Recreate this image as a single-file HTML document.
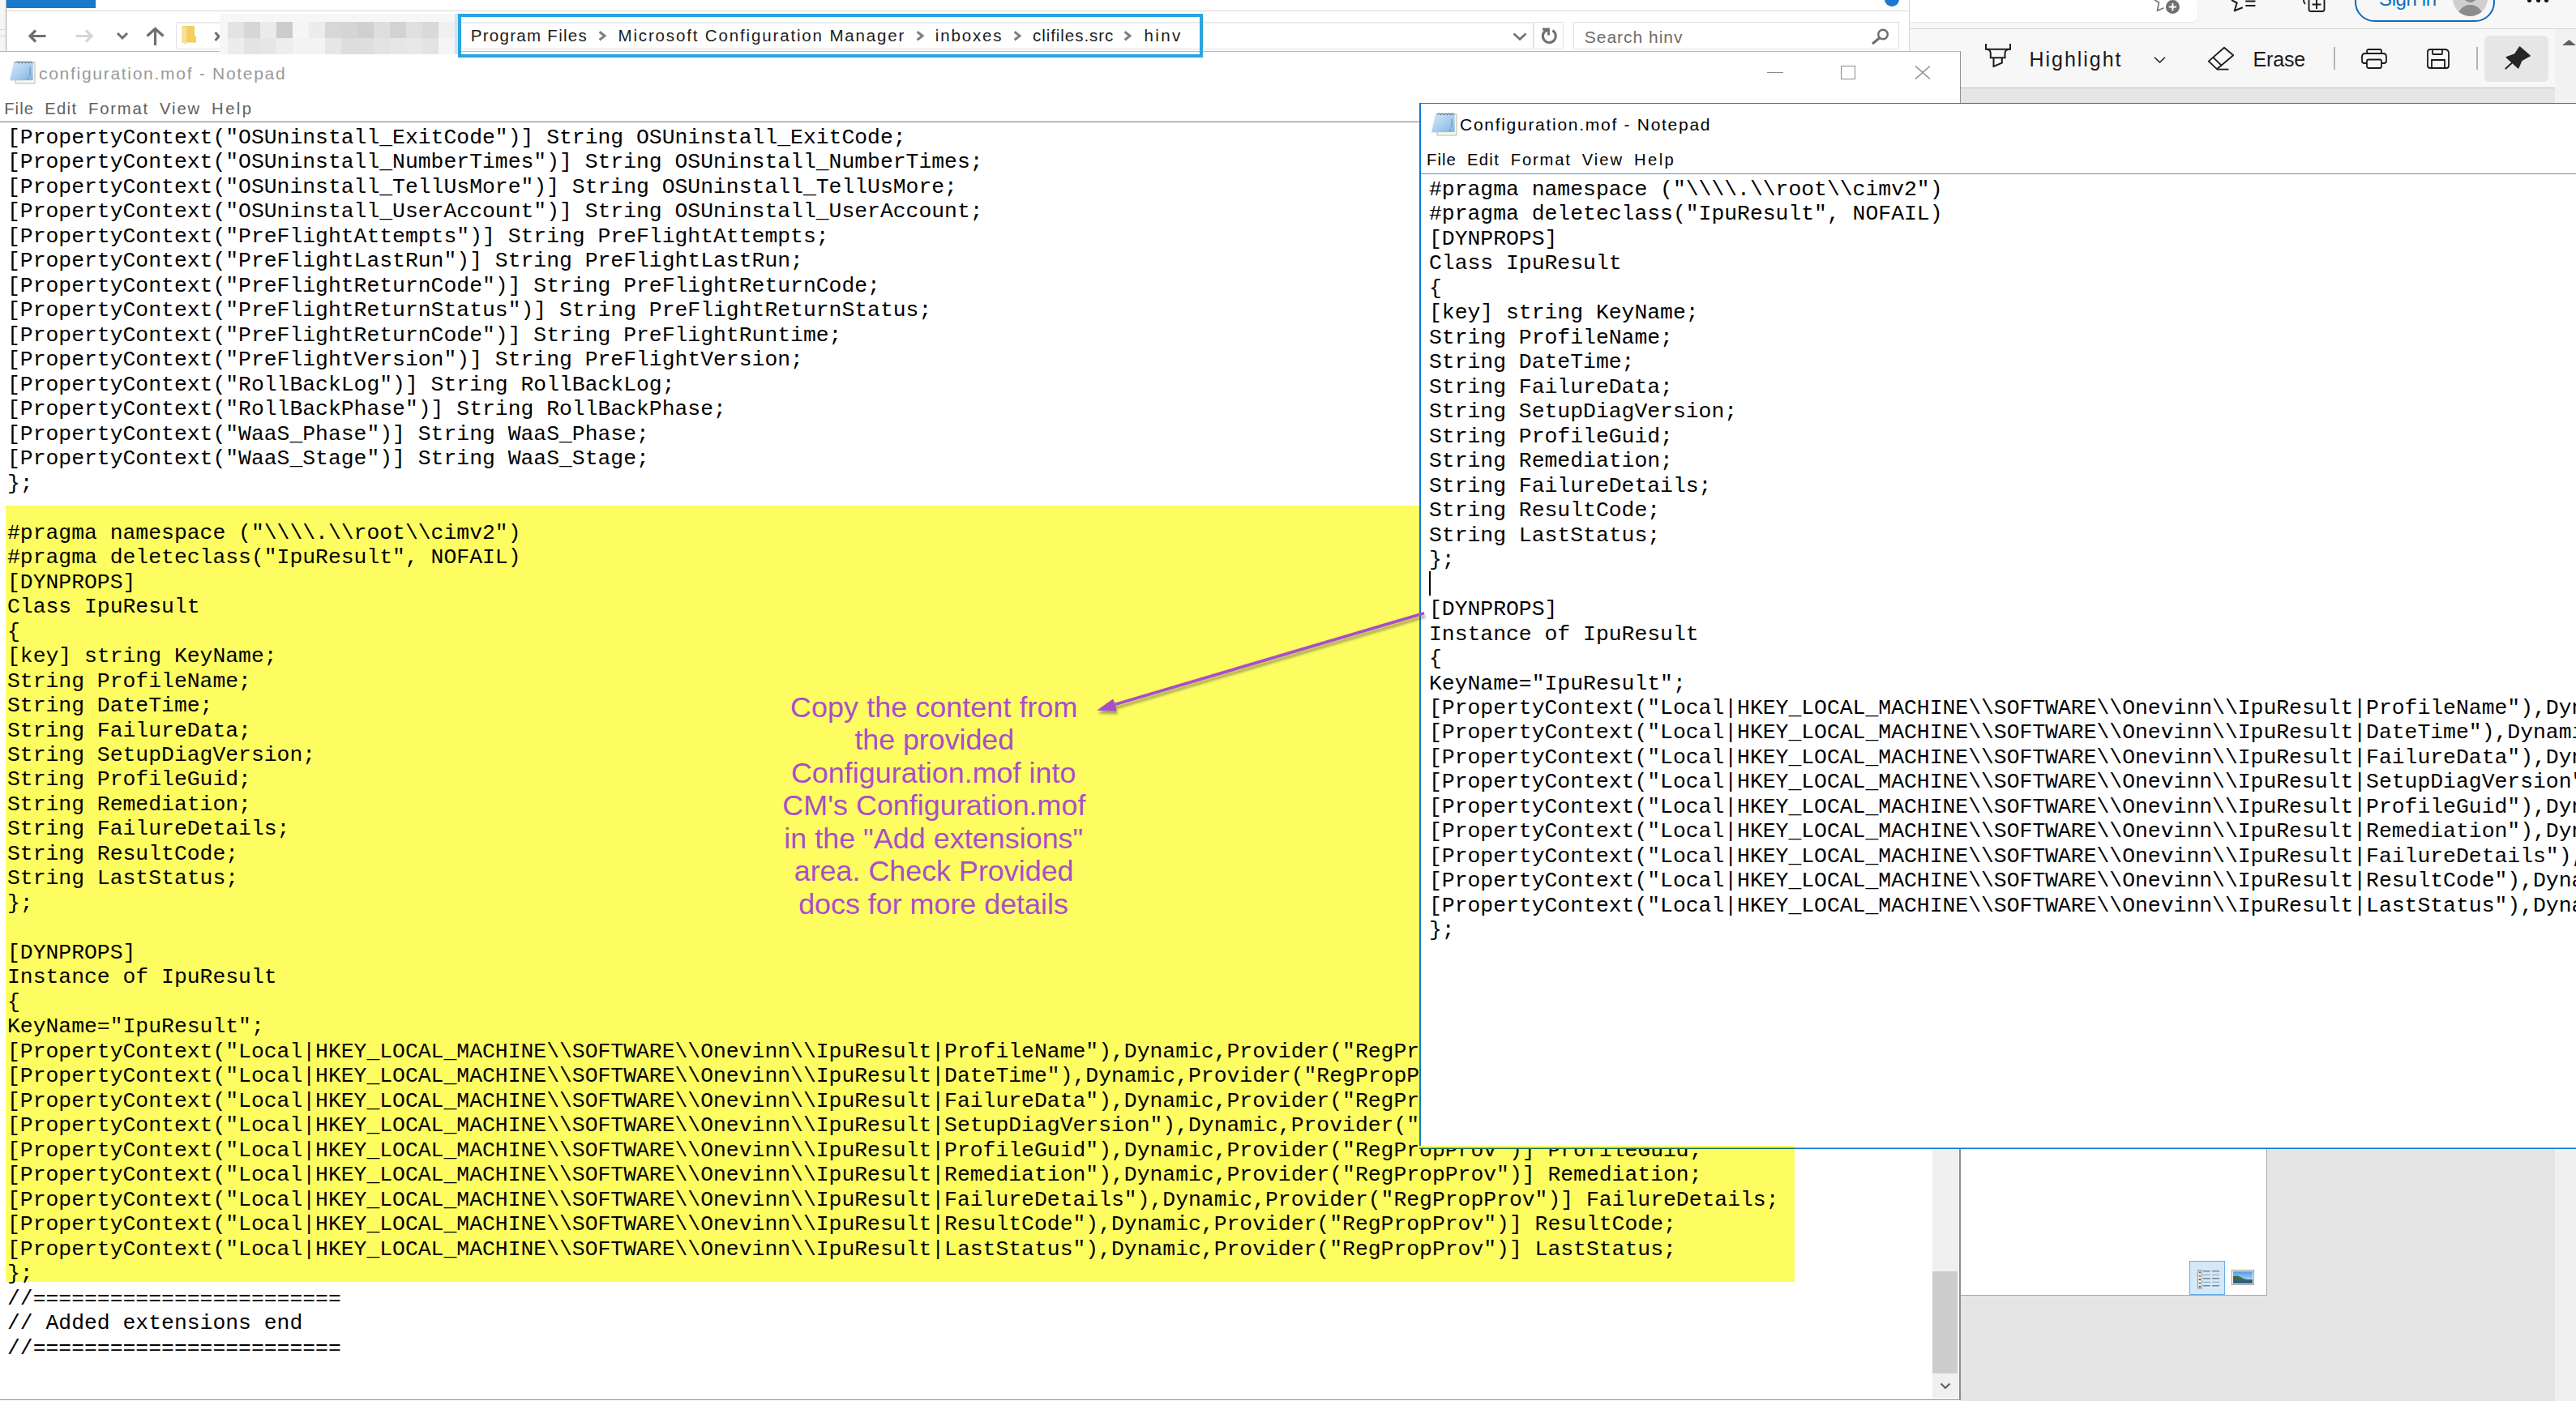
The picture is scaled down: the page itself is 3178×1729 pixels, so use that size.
<!DOCTYPE html>
<html><head><meta charset="utf-8"><style>
*{margin:0;padding:0;box-sizing:border-box}
html,body{width:3178px;height:1729px;overflow:hidden}
body{position:relative;background:#fff;font-family:"Liberation Sans",sans-serif;color:#000}
.a{position:absolute}
.ui{white-space:pre}
.mono{position:absolute;font-family:"Liberation Mono",monospace;font-size:26.40px;line-height:30.48px;white-space:pre;color:#000}
svg{overflow:visible}
</style></head><body>

<div class="a" style="left:0px;top:0px;width:2355px;height:63px;background:#fff"></div>
<div class="a" style="left:0px;top:0px;width:8px;height:63px;background:#f5f5f5;border-right:1px solid #a8a8a8"></div>
<div class="a" style="left:0px;top:36px;width:7px;height:1px;background:#d9d9d9"></div>
<div class="a" style="left:0px;top:44px;width:7px;height:1px;background:#d9d9d9"></div>
<div class="a" style="left:8px;top:0px;width:110px;height:10px;background:#1979ca"></div>
<div class="a" style="left:8px;top:13px;width:2347px;height:1px;background:#d6d6d6"></div>
<svg class="a" style="left:35px;top:36px" width="22" height="17" viewBox="0 0 22 17"><path d="M9 1.5 L2 8.5 L9 15.5 M2.5 8.5 H21.5" fill="none" stroke="#6f6f6f" stroke-width="3.2"/></svg>
<svg class="a" style="left:93px;top:36px" width="22" height="17" viewBox="0 0 22 17"><path d="M13 1.5 L20 8.5 L13 15.5 M19.5 8.5 H0.5" fill="none" stroke="#d6d6d6" stroke-width="3.2"/></svg>
<svg class="a" style="left:144px;top:40px" width="14" height="8" viewBox="0 0 14 8"><path d="M1 1 L7 7 L13 1" fill="none" stroke="#6f6f6f" stroke-width="3"/></svg>
<svg class="a" style="left:180px;top:34px" width="23" height="22" viewBox="0 0 23 22"><path d="M1.5 10.5 L11.5 1.5 L21.5 10.5 M11.5 2 V22" fill="none" stroke="#6f6f6f" stroke-width="3.2"/></svg>
<div class="a" style="left:217px;top:26.5px;width:1675px;height:34.5px;border:1px solid #e2e2e2;border-top:2px solid #ebebeb;background:#fff"></div>
<div class="a" style="left:1892px;top:27px;width:37px;height:34px;border:1px solid #e3e3e3;background:#fff"></div>
<div class="a" style="left:1941px;top:27px;width:402px;height:34px;border:1px solid #e2e2e2;background:#fff"></div>
<svg class="a" style="left:224px;top:31px" width="19" height="25" viewBox="0 0 19 25"><path d="M0.5 1 H16 V13.5 H18 V21.5 H0.5 Z" fill="#f3cf62"/><path d="M0.5 1 L6 3 V24 L0.5 21.5 Z" fill="#f9e09a"/></svg>
<svg class="a" style="left:264px;top:39px" width="8" height="12" viewBox="0 0 8 12"><path d="M1.5 1 L6 6 L1.5 11" fill="none" stroke="#6f6f6f" stroke-width="3"/></svg>
<div class="a ui" style="left:580.80px;top:34.04px;font-size:20.5px;line-height:1;color:#1b1b1b;letter-spacing:1.280px;">Program Files</div>
<div class="a ui" style="left:762.50px;top:34.04px;font-size:20.5px;line-height:1;color:#1b1b1b;letter-spacing:1.851px;">Microsoft Configuration Manager</div>
<div class="a ui" style="left:1153.80px;top:34.04px;font-size:20.5px;line-height:1;color:#1b1b1b;letter-spacing:1.832px;">inboxes</div>
<div class="a ui" style="left:1274.00px;top:34.04px;font-size:20.5px;line-height:1;color:#1b1b1b;letter-spacing:0.947px;">clifiles.src</div>
<div class="a ui" style="left:1411.60px;top:34.04px;font-size:20.5px;line-height:1;color:#1b1b1b;letter-spacing:2.348px;">hinv</div>
<svg class="a" style="left:737.5px;top:38.3px" width="11" height="13" viewBox="0 0 11 13"><path d="M1.6 1.2 L8 6.2 L1.6 11.2" fill="none" stroke="#808080" stroke-width="3"/></svg>
<svg class="a" style="left:1130px;top:38.3px" width="11" height="13" viewBox="0 0 11 13"><path d="M1.6 1.2 L8 6.2 L1.6 11.2" fill="none" stroke="#808080" stroke-width="3"/></svg>
<svg class="a" style="left:1250.3px;top:38.3px" width="11" height="13" viewBox="0 0 11 13"><path d="M1.6 1.2 L8 6.2 L1.6 11.2" fill="none" stroke="#808080" stroke-width="3"/></svg>
<svg class="a" style="left:1386.2px;top:38.3px" width="11" height="13" viewBox="0 0 11 13"><path d="M1.6 1.2 L8 6.2 L1.6 11.2" fill="none" stroke="#808080" stroke-width="3"/></svg>
<svg class="a" style="left:1866px;top:40px" width="18" height="10" viewBox="0 0 18 10"><path d="M1.5 1.5 L9 8.5 L16.5 1.5" fill="none" stroke="#6f6f6f" stroke-width="2.6"/></svg>
<svg class="a" style="left:1900px;top:33px" width="24" height="24" viewBox="0 0 24 24"><path d="M15.4 4.6 A8 8 0 1 1 5.7 5.8 L9.5 3.8" fill="none" stroke="#6f6f6f" stroke-width="3.1"/><path d="M3 3 H10.5 V10.5" fill="none" stroke="#6f6f6f" stroke-width="2.8"/></svg>
<div class="a ui" style="left:1954.80px;top:34.62px;font-size:21px;line-height:1;color:#6d6d6d;letter-spacing:0.980px;">Search hinv</div>
<svg class="a" style="left:2308px;top:35px" width="23" height="20" viewBox="0 0 23 20"><circle cx="15" cy="7.5" r="5.8" fill="none" stroke="#6d6d6d" stroke-width="2.4"/><path d="M10.5 12 L2 19" stroke="#6d6d6d" stroke-width="3"/></svg>
<div class="a" style="left:2355px;top:0px;width:1px;height:63px;background:#d9d9d9"></div>
<div class="a" style="left:2325px;top:-10px;width:18px;height:18px;background:#1979ca;border-radius:50%"></div>
<div class="a" style="left:2356px;top:0px;width:822px;height:127px;background:#f7f7f7"></div>
<div class="a" style="left:2356px;top:0px;width:355px;height:27px;background:#fff;border-bottom-right-radius:7px;box-shadow:0 1px 2px rgba(0,0,0,.08)"></div>
<svg class="a" style="left:2658px;top:0px" width="32" height="18" viewBox="0 0 32 18"><path d="M0 0 L5.5 3 L3.5 13.3 L11.5 9.8" fill="none" stroke="#777" stroke-width="1.7" stroke-linejoin="round"/><circle cx="22.4" cy="8.6" r="8.5" fill="#707070"/><path d="M22.4 4 V13.2 M17.8 8.6 H27" stroke="#fff" stroke-width="2"/></svg>
<svg class="a" style="left:2753px;top:0px" width="32" height="16" viewBox="0 0 32 16"><path d="M0 0 L6.7 3.5 L3.7 13.3 L13.8 9.3" fill="none" stroke="#1b1b1b" stroke-width="2" stroke-linejoin="round"/><path d="M17.3 1.5 H29.4 M17.3 7 H29.4" stroke="#1b1b1b" stroke-width="2"/></svg>
<svg class="a" style="left:2840px;top:-4px" width="30" height="19" viewBox="0 0 30 19"><path d="M4 0 Q0 5 4 9" fill="none" stroke="#1b1b1b" stroke-width="1.8"/><rect x="8.5" y="1" width="19" height="17" rx="2.5" fill="none" stroke="#1b1b1b" stroke-width="1.9"/><path d="M18 4 V15 M12.5 9.5 H23.5" stroke="#1b1b1b" stroke-width="1.9"/></svg>
<div class="a" style="left:2905px;top:-22px;width:173px;height:49px;border:2px solid #0f6cbd;border-radius:25px"></div>
<div class="a ui" style="left:2935.00px;top:-12.62px;font-size:24px;line-height:1;color:#0f6cbd;letter-spacing:-0.373px;">Sign in</div>
<div class="a" style="left:3026px;top:-23px;width:43px;height:43px;border-radius:50%;background:#cfcfcf;overflow:hidden"><div class="a" style="left:6px;top:29px;width:31px;height:30px;border-radius:50%;background:#8c8c8c"></div><div class="a" style="left:13px;top:9px;width:17px;height:17px;border-radius:50%;background:#8c8c8c"></div></div>
<div class="a" style="left:3118.4px;top:-2px;width:5px;height:5px;background:#111;border-radius:50%"></div>
<div class="a" style="left:3128.6px;top:-2px;width:5px;height:5px;background:#111;border-radius:50%"></div>
<div class="a" style="left:3138.7px;top:-2px;width:5px;height:5px;background:#111;border-radius:50%"></div>
<div class="a" style="left:2356px;top:35px;width:822px;height:1px;background:#d4d4d4"></div>
<div class="a" style="left:2356px;top:36px;width:822px;height:72px;background:#f7f7f7"></div>
<div class="a" style="left:3152px;top:36px;width:26px;height:91px;background:#f2f2f2"></div>
<div class="a" style="left:2356px;top:108px;width:796px;height:1.5px;background:#c2c2c2"></div>
<div class="a" style="left:2356px;top:109px;width:796px;height:18px;background:#e6e6e6"></div>
<svg class="a" style="left:2449px;top:54px" width="32" height="30" viewBox="0 0 32 30"><path d="M1 0 V6.8 H31 V0" fill="none" stroke="#1b1b1b" stroke-width="2"/><path d="M2 6.8 Q6.8 7.5 6.8 12 V17.3 H24.5 V12 Q24.5 7.5 29.5 6.8" fill="none" stroke="#1b1b1b" stroke-width="2"/><path d="M10.5 17.3 V28 L20.8 23.7 V17.3" fill="none" stroke="#1b1b1b" stroke-width="2"/></svg>
<div class="a ui" style="left:2503.60px;top:60.63px;font-size:25px;line-height:1;color:#1b1b1b;letter-spacing:1.958px;">Highlight</div>
<svg class="a" style="left:2657px;top:70px" width="15" height="8" viewBox="0 0 15 8"><path d="M1 0.8 L7.5 7 L14 0.8" fill="none" stroke="#1b1b1b" stroke-width="1.5"/></svg>
<svg class="a" style="left:2724px;top:58px" width="33" height="30" viewBox="0 0 33 30"><path d="M11 27.6 H25.5" stroke="#1b1b1b" stroke-width="1.8"/><path d="M20 0.8 L31.2 10.2 L11 27.2 L0.8 17.6 Z" fill="none" stroke="#1b1b1b" stroke-width="1.8" stroke-linejoin="round"/><path d="M6.5 13 L16.5 22.6" stroke="#1b1b1b" stroke-width="1.8"/></svg>
<div class="a ui" style="left:2779.50px;top:60.63px;font-size:25px;line-height:1;color:#1b1b1b;letter-spacing:-0.151px;">Erase</div>
<div class="a" style="left:2879px;top:58px;width:2px;height:28px;background:#b4b4b4"></div>
<div class="a" style="left:3055px;top:58px;width:2px;height:28px;background:#b4b4b4"></div>
<svg class="a" style="left:2913px;top:60px" width="32" height="25" viewBox="0 0 32 25"><rect x="7" y="1" width="18" height="5" rx="2" fill="none" stroke="#1b1b1b" stroke-width="1.8"/><path d="M7 18 H4 Q1 18 1 15 V10 Q1 6 5 6 H27 Q31 6 31 10 V15 Q31 18 28 18 H25" fill="none" stroke="#1b1b1b" stroke-width="1.8"/><rect x="7" y="13.5" width="18" height="10.5" rx="2" fill="none" stroke="#1b1b1b" stroke-width="1.8"/></svg>
<svg class="a" style="left:2994px;top:60px" width="28" height="25" viewBox="0 0 28 25"><path d="M4 1 H22 Q27 1 27 6 V21 Q27 24 24 24 H4 Q1 24 1 21 V4 Q1 1 4 1 Z" fill="none" stroke="#1b1b1b" stroke-width="1.8"/><path d="M7 1 V6 Q7 7 8 7 H18 Q19 7 19 6 V1 M6 24 V14 H22 V24" fill="none" stroke="#1b1b1b" stroke-width="1.8"/></svg>
<div class="a" style="left:3065px;top:44px;width:79px;height:57px;background:#e6e6e6;border-radius:6px"></div>
<svg class="a" style="left:3088px;top:55px" width="36" height="32" viewBox="0 0 36 32"><path d="M20.6 3 L33 13.9 L22.7 19.6 L18.8 28.8 L4.3 15.7 L14.5 12.1 Z" fill="#262626" stroke="#262626" stroke-width="1.6" stroke-linejoin="round"/><path d="M10.6 22.9 L3.4 29.6" stroke="#262626" stroke-width="2" stroke-linecap="round"/></svg>
<svg class="a" style="left:3161px;top:49px" width="17" height="7" viewBox="0 0 17 7"><path d="M0 7 L8.5 0 L17 7 Z" fill="#606060"/></svg>
<div class="a" style="left:0px;top:63px;width:2419px;height:1665px;background:#fff;border:1px solid #8f8f8f;border-top-color:#b8b8b8;border-left:none"></div>
<svg class="a" style="left:12px;top:75px" width="32" height="29" viewBox="0 0 32 29"><defs><linearGradient id="ng12" x1="0" y1="0" x2="1" y2="1"><stop offset="0" stop-color="#d4e8f8"/><stop offset=".55" stop-color="#a9cdee"/><stop offset="1" stop-color="#7fb2e0"/></linearGradient></defs>
<path d="M7 2 H31 V28 H7 Z" fill="#f6f6f2" stroke="#b0aa88" stroke-width=".8"/>
<path d="M5 1.3 H28.6 V24 L0 24.4 Z" fill="url(#ng12)"/>
<path d="M25 8 V18 M24 20 q-3 2 -1 3" stroke="#5d8fc8" stroke-width="1" fill="none"/>
<path d="M7 2.6 q2.1 -3.2 4.2 0 q2.1 -3.2 4.2 0 q2.1 -3.2 4.2 0 q2.1 -3.2 4.2 0 q2.1 -3.2 4.2 0" fill="none" stroke="#56647c" stroke-width="1.1"/></svg>
<div class="a ui" style="left:48.00px;top:80.22px;font-size:21px;line-height:1;color:#999999;letter-spacing:1.713px;">configuration.mof - Notepad</div>
<div class="a" style="left:2180px;top:89px;width:20px;height:1px;background:#8a8a8a"></div>
<div class="a" style="left:2270.5px;top:81px;width:18.5px;height:17px;border:1px solid #8a8a8a"></div>
<svg class="a" style="left:2362px;top:81px" width="20" height="17" viewBox="0 0 20 17"><path d="M1 0.5 L19 16.5 M19 0.5 L1 16.5" stroke="#8a8a8a" stroke-width="1.5"/></svg>
<div class="a ui" style="left:5.20px;top:123.90px;font-size:20.2px;line-height:1;color:#606060;letter-spacing:1.066px;">File</div>
<div class="a ui" style="left:55.20px;top:123.90px;font-size:20.2px;line-height:1;color:#606060;letter-spacing:1.341px;">Edit</div>
<div class="a ui" style="left:109.00px;top:123.90px;font-size:20.2px;line-height:1;color:#606060;letter-spacing:1.835px;">Format</div>
<div class="a ui" style="left:196.90px;top:123.90px;font-size:20.2px;line-height:1;color:#606060;letter-spacing:1.963px;">View</div>
<div class="a ui" style="left:261.10px;top:123.90px;font-size:20.2px;line-height:1;color:#606060;letter-spacing:2.470px;">Help</div>
<div class="a" style="left:0px;top:149px;width:2417px;height:1px;background:#e8e8e8"></div>
<div class="a" style="left:0px;top:150px;width:2417px;height:1.2px;background:#8a8a8a"></div>
<div class="a" style="left:2383.5px;top:151px;width:32px;height:1575px;background:#f0f0f0"></div>
<div class="a" style="left:2384px;top:1569px;width:31px;height:126px;background:#cdcdcd"></div>
<svg class="a" style="left:2393px;top:1706px" width="14" height="9" viewBox="0 0 14 9"><path d="M1.5 1.5 L7 7 L12.5 1.5" fill="none" stroke="#606060" stroke-width="2.2"/></svg>
<div class="a" style="left:7px;top:624px;width:2207px;height:958px;background:#fdfd62"></div>
<div class="mono" style="left:9px;top:155.00px">[PropertyContext("OSUninstall_ExitCode")] String OSUninstall_ExitCode;</div>
<div class="mono" style="left:9px;top:185.48px">[PropertyContext("OSUninstall_NumberTimes")] String OSUninstall_NumberTimes;</div>
<div class="mono" style="left:9px;top:215.96px">[PropertyContext("OSUninstall_TellUsMore")] String OSUninstall_TellUsMore;</div>
<div class="mono" style="left:9px;top:246.44px">[PropertyContext("OSUninstall_UserAccount")] String OSUninstall_UserAccount;</div>
<div class="mono" style="left:9px;top:276.92px">[PropertyContext("PreFlightAttempts")] String PreFlightAttempts;</div>
<div class="mono" style="left:9px;top:307.40px">[PropertyContext("PreFlightLastRun")] String PreFlightLastRun;</div>
<div class="mono" style="left:9px;top:337.88px">[PropertyContext("PreFlightReturnCode")] String PreFlightReturnCode;</div>
<div class="mono" style="left:9px;top:368.36px">[PropertyContext("PreFlightReturnStatus")] String PreFlightReturnStatus;</div>
<div class="mono" style="left:9px;top:398.84px">[PropertyContext("PreFlightReturnCode")] String PreFlightRuntime;</div>
<div class="mono" style="left:9px;top:429.32px">[PropertyContext("PreFlightVersion")] String PreFlightVersion;</div>
<div class="mono" style="left:9px;top:459.80px">[PropertyContext("RollBackLog")] String RollBackLog;</div>
<div class="mono" style="left:9px;top:490.28px">[PropertyContext("RollBackPhase")] String RollBackPhase;</div>
<div class="mono" style="left:9px;top:520.76px">[PropertyContext("WaaS_Phase")] String WaaS_Phase;</div>
<div class="mono" style="left:9px;top:551.24px">[PropertyContext("WaaS_Stage")] String WaaS_Stage;</div>
<div class="mono" style="left:9px;top:581.72px">};</div>
<div class="mono" style="left:9px;top:642.68px">#pragma namespace ("\\\\.\\root\\cimv2")</div>
<div class="mono" style="left:9px;top:673.16px">#pragma deleteclass("IpuResult", NOFAIL)</div>
<div class="mono" style="left:9px;top:703.64px">[DYNPROPS]</div>
<div class="mono" style="left:9px;top:734.12px">Class IpuResult</div>
<div class="mono" style="left:9px;top:764.60px">{</div>
<div class="mono" style="left:9px;top:795.08px">[key] string KeyName;</div>
<div class="mono" style="left:9px;top:825.56px">String ProfileName;</div>
<div class="mono" style="left:9px;top:856.04px">String DateTime;</div>
<div class="mono" style="left:9px;top:886.52px">String FailureData;</div>
<div class="mono" style="left:9px;top:917.00px">String SetupDiagVersion;</div>
<div class="mono" style="left:9px;top:947.48px">String ProfileGuid;</div>
<div class="mono" style="left:9px;top:977.96px">String Remediation;</div>
<div class="mono" style="left:9px;top:1008.44px">String FailureDetails;</div>
<div class="mono" style="left:9px;top:1038.92px">String ResultCode;</div>
<div class="mono" style="left:9px;top:1069.40px">String LastStatus;</div>
<div class="mono" style="left:9px;top:1099.88px">};</div>
<div class="mono" style="left:9px;top:1160.84px">[DYNPROPS]</div>
<div class="mono" style="left:9px;top:1191.32px">Instance of IpuResult</div>
<div class="mono" style="left:9px;top:1221.80px">{</div>
<div class="mono" style="left:9px;top:1252.28px">KeyName="IpuResult";</div>
<div class="mono" style="left:9px;top:1282.76px">[PropertyContext("Local|HKEY_LOCAL_MACHINE\\SOFTWARE\\Onevinn\\IpuResult|ProfileName"),Dynamic,Provider("RegPropProv")] ProfileName;</div>
<div class="mono" style="left:9px;top:1313.24px">[PropertyContext("Local|HKEY_LOCAL_MACHINE\\SOFTWARE\\Onevinn\\IpuResult|DateTime"),Dynamic,Provider("RegPropProv")] DateTime;</div>
<div class="mono" style="left:9px;top:1343.72px">[PropertyContext("Local|HKEY_LOCAL_MACHINE\\SOFTWARE\\Onevinn\\IpuResult|FailureData"),Dynamic,Provider("RegPropProv")] FailureData;</div>
<div class="mono" style="left:9px;top:1374.20px">[PropertyContext("Local|HKEY_LOCAL_MACHINE\\SOFTWARE\\Onevinn\\IpuResult|SetupDiagVersion"),Dynamic,Provider("RegPropProv")] SetupDiagVersion;</div>
<div class="mono" style="left:9px;top:1404.68px">[PropertyContext("Local|HKEY_LOCAL_MACHINE\\SOFTWARE\\Onevinn\\IpuResult|ProfileGuid"),Dynamic,Provider("RegPropProv")] ProfileGuid;</div>
<div class="mono" style="left:9px;top:1435.16px">[PropertyContext("Local|HKEY_LOCAL_MACHINE\\SOFTWARE\\Onevinn\\IpuResult|Remediation"),Dynamic,Provider("RegPropProv")] Remediation;</div>
<div class="mono" style="left:9px;top:1465.64px">[PropertyContext("Local|HKEY_LOCAL_MACHINE\\SOFTWARE\\Onevinn\\IpuResult|FailureDetails"),Dynamic,Provider("RegPropProv")] FailureDetails;</div>
<div class="mono" style="left:9px;top:1496.12px">[PropertyContext("Local|HKEY_LOCAL_MACHINE\\SOFTWARE\\Onevinn\\IpuResult|ResultCode"),Dynamic,Provider("RegPropProv")] ResultCode;</div>
<div class="mono" style="left:9px;top:1526.60px">[PropertyContext("Local|HKEY_LOCAL_MACHINE\\SOFTWARE\\Onevinn\\IpuResult|LastStatus"),Dynamic,Provider("RegPropProv")] LastStatus;</div>
<div class="mono" style="left:9px;top:1557.08px">};</div>
<div class="mono" style="left:9px;top:1587.56px">//========================</div>
<div class="mono" style="left:9px;top:1618.04px">// Added extensions end</div>
<div class="mono" style="left:9px;top:1648.52px">//========================</div>
<div class="a" style="left:1751px;top:127px;width:1437px;height:1289px;background:#fff;border-top:1px solid #0b78d6;border-left:2px solid #0b78d6;overflow:hidden">
</div>
<svg class="a" style="left:1766px;top:139px" width="32" height="29" viewBox="0 0 32 29"><defs><linearGradient id="ng1766" x1="0" y1="0" x2="1" y2="1"><stop offset="0" stop-color="#d4e8f8"/><stop offset=".55" stop-color="#a9cdee"/><stop offset="1" stop-color="#7fb2e0"/></linearGradient></defs>
<path d="M7 2 H31 V28 H7 Z" fill="#f6f6f2" stroke="#b0aa88" stroke-width=".8"/>
<path d="M5 1.3 H28.6 V24 L0 24.4 Z" fill="url(#ng1766)"/>
<path d="M25 8 V18 M24 20 q-3 2 -1 3" stroke="#5d8fc8" stroke-width="1" fill="none"/>
<path d="M7 2.6 q2.1 -3.2 4.2 0 q2.1 -3.2 4.2 0 q2.1 -3.2 4.2 0 q2.1 -3.2 4.2 0 q2.1 -3.2 4.2 0" fill="none" stroke="#56647c" stroke-width="1.1"/></svg>
<div class="a ui" style="left:1801.00px;top:143.42px;font-size:21px;line-height:1;color:#000;letter-spacing:1.718px;">Configuration.mof - Notepad</div>
<div class="a ui" style="left:1760.00px;top:187.20px;font-size:20.2px;line-height:1;color:#000;letter-spacing:1.066px;">File</div>
<div class="a ui" style="left:1810.00px;top:187.20px;font-size:20.2px;line-height:1;color:#000;letter-spacing:1.341px;">Edit</div>
<div class="a ui" style="left:1863.80px;top:187.20px;font-size:20.2px;line-height:1;color:#000;letter-spacing:1.835px;">Format</div>
<div class="a ui" style="left:1951.70px;top:187.20px;font-size:20.2px;line-height:1;color:#000;letter-spacing:1.963px;">View</div>
<div class="a ui" style="left:2015.90px;top:187.20px;font-size:20.2px;line-height:1;color:#000;letter-spacing:2.470px;">Help</div>
<div class="a" style="left:1753px;top:214px;width:1425px;height:1.2px;background:#4a98dc"></div>
<div class="a" style="left:1753px;top:215px;width:1425px;height:1200px;overflow:hidden">
<div class="mono" style="left:10px;top:3.90px">#pragma namespace ("\\\\.\\root\\cimv2")</div>
<div class="mono" style="left:10px;top:34.38px">#pragma deleteclass("IpuResult", NOFAIL)</div>
<div class="mono" style="left:10px;top:64.86px">[DYNPROPS]</div>
<div class="mono" style="left:10px;top:95.34px">Class IpuResult</div>
<div class="mono" style="left:10px;top:125.82px">{</div>
<div class="mono" style="left:10px;top:156.30px">[key] string KeyName;</div>
<div class="mono" style="left:10px;top:186.78px">String ProfileName;</div>
<div class="mono" style="left:10px;top:217.26px">String DateTime;</div>
<div class="mono" style="left:10px;top:247.74px">String FailureData;</div>
<div class="mono" style="left:10px;top:278.22px">String SetupDiagVersion;</div>
<div class="mono" style="left:10px;top:308.70px">String ProfileGuid;</div>
<div class="mono" style="left:10px;top:339.18px">String Remediation;</div>
<div class="mono" style="left:10px;top:369.66px">String FailureDetails;</div>
<div class="mono" style="left:10px;top:400.14px">String ResultCode;</div>
<div class="mono" style="left:10px;top:430.62px">String LastStatus;</div>
<div class="mono" style="left:10px;top:461.10px">};</div>
<div class="mono" style="left:10px;top:522.06px">[DYNPROPS]</div>
<div class="mono" style="left:10px;top:552.54px">Instance of IpuResult</div>
<div class="mono" style="left:10px;top:583.02px">{</div>
<div class="mono" style="left:10px;top:613.50px">KeyName="IpuResult";</div>
<div class="mono" style="left:10px;top:643.98px">[PropertyContext("Local|HKEY_LOCAL_MACHINE\\SOFTWARE\\Onevinn\\IpuResult|ProfileName"),Dynamic,Provider("RegPropProv")] ProfileName;</div>
<div class="mono" style="left:10px;top:674.46px">[PropertyContext("Local|HKEY_LOCAL_MACHINE\\SOFTWARE\\Onevinn\\IpuResult|DateTime"),Dynamic,Provider("RegPropProv")] DateTime;</div>
<div class="mono" style="left:10px;top:704.94px">[PropertyContext("Local|HKEY_LOCAL_MACHINE\\SOFTWARE\\Onevinn\\IpuResult|FailureData"),Dynamic,Provider("RegPropProv")] FailureData;</div>
<div class="mono" style="left:10px;top:735.42px">[PropertyContext("Local|HKEY_LOCAL_MACHINE\\SOFTWARE\\Onevinn\\IpuResult|SetupDiagVersion"),Dynamic,Provider("RegPropProv")] SetupDiagVersion;</div>
<div class="mono" style="left:10px;top:765.90px">[PropertyContext("Local|HKEY_LOCAL_MACHINE\\SOFTWARE\\Onevinn\\IpuResult|ProfileGuid"),Dynamic,Provider("RegPropProv")] ProfileGuid;</div>
<div class="mono" style="left:10px;top:796.38px">[PropertyContext("Local|HKEY_LOCAL_MACHINE\\SOFTWARE\\Onevinn\\IpuResult|Remediation"),Dynamic,Provider("RegPropProv")] Remediation;</div>
<div class="mono" style="left:10px;top:826.86px">[PropertyContext("Local|HKEY_LOCAL_MACHINE\\SOFTWARE\\Onevinn\\IpuResult|FailureDetails"),Dynamic,Provider("RegPropProv")] FailureDetails;</div>
<div class="mono" style="left:10px;top:857.34px">[PropertyContext("Local|HKEY_LOCAL_MACHINE\\SOFTWARE\\Onevinn\\IpuResult|ResultCode"),Dynamic,Provider("RegPropProv")] ResultCode;</div>
<div class="mono" style="left:10px;top:887.82px">[PropertyContext("Local|HKEY_LOCAL_MACHINE\\SOFTWARE\\Onevinn\\IpuResult|LastStatus"),Dynamic,Provider("RegPropProv")] LastStatus;</div>
<div class="mono" style="left:10px;top:918.30px">};</div>
</div>
<div class="a" style="left:1763px;top:704.5px;width:1.6px;height:30px;background:#000"></div>
<div class="a" style="left:1751px;top:1417px;width:1427px;height:1px;background:#0b78d6"></div>
<div class="a" style="left:1751px;top:1416px;width:1427px;height:1px;background:#7ab4e8"></div>
<div class="a" style="left:1751px;top:1417px;width:463px;height:1px;background:#16735f"></div>
<div class="a" style="left:1751px;top:1416px;width:463px;height:1px;background:#8ab872"></div>
<div class="a" style="left:1751px;top:1414px;width:463px;height:2px;background:#fdfd62"></div>
<div class="a" style="left:2419px;top:1418px;width:733px;height:311px;background:#e5e5e5"></div>
<div class="a" style="left:3152px;top:1418px;width:26px;height:311px;background:#f0f0f0"></div>
<div class="a" style="left:2419px;top:1418px;width:378px;height:181px;background:#fff;border-right:1px solid #a8a8a8;border-bottom:1px solid #a8a8a8"></div>
<div class="a" style="left:2417px;top:1418px;width:2px;height:310px;background:#8c8c8c"></div>
<div class="a" style="left:2701px;top:1556px;width:44px;height:42px;background:#d3e8f8;border:1.5px solid #63acee"></div>
<svg class="a" style="left:2711px;top:1567px" width="26" height="24" viewBox="0 0 26 24"><rect x="0.6" y="0.6" width="4.6" height="22.4" fill="#fff" stroke="#8a8a8a" stroke-width="1"/><rect x="1.8" y="2.2" width="2.2" height="2.2" fill="#3a7ab8"/><rect x="1.8" y="6.6" width="2.2" height="2.2" fill="#c07030"/><rect x="1.8" y="11" width="2.2" height="2.2" fill="#b04020"/><rect x="1.8" y="15.4" width="2.2" height="2.2" fill="#50a050"/><rect x="1.8" y="19.8" width="2.2" height="2.2" fill="#3a7ab8"/><path d="M7 1.8 H15.8 M18.2 1.8 H27 M7 10.8 H15.8 M18.2 10.8 H27 M7 19.8 H15.8 M18.2 19.8 H27" stroke="#555" stroke-width="1"/><path d="M7 6.3 H15.8 M18.2 6.3 H27 M7 15.3 H15.8 M18.2 15.3 H27" stroke="#8f9fb0" stroke-width="1"/></svg>
<svg class="a" style="left:2753px;top:1567px" width="28" height="19" viewBox="0 0 28 19"><rect x="0.5" y="0.5" width="27" height="18" fill="#fff" stroke="#999"/><defs><linearGradient id="sky" x1="0" y1="0" x2="0" y2="1"><stop offset="0" stop-color="#4a9be8"/><stop offset="1" stop-color="#d8ecfa"/></linearGradient></defs><rect x="2" y="2" width="24" height="15" fill="url(#sky)"/><path d="M2 8 Q8 6.5 12 9.5 T26 12 V14 H2 Z" fill="#3a6a4a"/><rect x="2" y="13.5" width="24" height="3.5" fill="#2c5a9a"/></svg>
<div class="a ui" style="left:975.10px;top:855.70px;font-size:35.9px;line-height:1;color:#a94ec9;letter-spacing:0.060px;">Copy the content from</div>
<div class="a ui" style="left:1054.40px;top:896.25px;font-size:35.9px;line-height:1;color:#a94ec9;letter-spacing:-0.071px;">the provided</div>
<div class="a ui" style="left:975.90px;top:936.80px;font-size:35.9px;line-height:1;color:#a94ec9;letter-spacing:0.025px;">Configuration.mof into</div>
<div class="a ui" style="left:965.30px;top:977.35px;font-size:35.9px;line-height:1;color:#a94ec9;letter-spacing:0.014px;">CM's Configuration.mof</div>
<div class="a ui" style="left:967.20px;top:1017.90px;font-size:35.9px;line-height:1;color:#a94ec9;letter-spacing:0.021px;">in the "Add extensions"</div>
<div class="a ui" style="left:979.70px;top:1058.45px;font-size:35.9px;line-height:1;color:#a94ec9;letter-spacing:-0.014px;">area. Check Provided</div>
<div class="a ui" style="left:985.20px;top:1099.00px;font-size:35.9px;line-height:1;color:#a94ec9;letter-spacing:-0.024px;">docs for more details</div>
<svg class="a" style="left:1340px;top:740px" width="420" height="150" viewBox="0 0 420 150"><defs><filter id="sh" x="-20%" y="-50%" width="140%" height="200%"><feGaussianBlur stdDeviation="1.6"/></filter></defs>
<g transform="translate(1.5,4)" opacity=".45" filter="url(#sh)"><path d="M417 16.7 L36 129.2" stroke="#444" stroke-width="3.8"/><path d="M13 136.7 L33.1 122.4 L36 129.5 L37.5 137.6 Z" fill="#444"/></g>
<path d="M417 16.7 L36 129.2" stroke="#a94ec9" stroke-width="3.8"/><path d="M13 136.7 L33.1 122.4 L36 129.5 L37.5 137.6 Z" fill="#a94ec9"/></svg>
<div class="a" style="left:271px;top:17px;width:290px;height:50px;background:#f7f7f7"></div>
<div class="a" style="left:281px;top:27px;width:20px;height:20px;background:#e3e3e3"></div>
<div class="a" style="left:281px;top:47px;width:20px;height:20px;background:#ececec"></div>
<div class="a" style="left:301px;top:27px;width:20px;height:20px;background:#d6d6d6"></div>
<div class="a" style="left:301px;top:47px;width:20px;height:20px;background:#e3e3e3"></div>
<div class="a" style="left:321px;top:27px;width:20px;height:20px;background:#ebebeb"></div>
<div class="a" style="left:321px;top:47px;width:20px;height:20px;background:#e6e6e6"></div>
<div class="a" style="left:341px;top:27px;width:20px;height:20px;background:#cccccc"></div>
<div class="a" style="left:341px;top:47px;width:20px;height:20px;background:#ededed"></div>
<div class="a" style="left:361px;top:27px;width:20px;height:20px;background:#f5f5f5"></div>
<div class="a" style="left:361px;top:47px;width:20px;height:20px;background:#f3f3f3"></div>
<div class="a" style="left:381px;top:27px;width:20px;height:20px;background:#ececec"></div>
<div class="a" style="left:381px;top:47px;width:20px;height:20px;background:#f3f3f3"></div>
<div class="a" style="left:401px;top:27px;width:20px;height:20px;background:#d7d7d7"></div>
<div class="a" style="left:401px;top:47px;width:20px;height:20px;background:#e6e6e6"></div>
<div class="a" style="left:421px;top:27px;width:20px;height:20px;background:#d5d5d5"></div>
<div class="a" style="left:421px;top:47px;width:20px;height:20px;background:#dddddd"></div>
<div class="a" style="left:441px;top:27px;width:20px;height:20px;background:#d0d0d0"></div>
<div class="a" style="left:441px;top:47px;width:20px;height:20px;background:#dedede"></div>
<div class="a" style="left:461px;top:27px;width:20px;height:20px;background:#dedede"></div>
<div class="a" style="left:461px;top:47px;width:20px;height:20px;background:#e3e3e3"></div>
<div class="a" style="left:481px;top:27px;width:20px;height:20px;background:#d3d3d3"></div>
<div class="a" style="left:481px;top:47px;width:20px;height:20px;background:#e6e6e6"></div>
<div class="a" style="left:501px;top:27px;width:20px;height:20px;background:#e0e0e0"></div>
<div class="a" style="left:501px;top:47px;width:20px;height:20px;background:#e8e8e8"></div>
<div class="a" style="left:521px;top:27px;width:20px;height:20px;background:#d9d9d9"></div>
<div class="a" style="left:521px;top:47px;width:20px;height:20px;background:#e3e3e3"></div>
<div class="a" style="left:541px;top:27px;width:20px;height:20px;background:#f0f0f0"></div>
<div class="a" style="left:541px;top:47px;width:20px;height:20px;background:#f5f5f5"></div>
<div class="a" style="left:561px;top:17px;width:4px;height:50px;background:#cfe5f5"></div>
<div class="a" style="left:565px;top:17px;width:919px;height:54px;border:4px solid #29a5df"></div>
</body></html>
